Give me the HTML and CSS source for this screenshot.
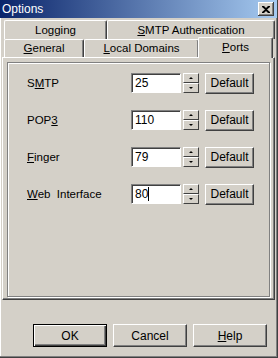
FILE: index.html
```html
<!DOCTYPE html>
<html lang="en">
<head>
    <meta charset="UTF-8">
    <title>Options</title>
    <link rel="stylesheet" href="styles.css">
</head>
<body>
    <div class="window">
        <div class="titlebar">
            <span class="title">Options</span>
            <button class="close">
                <svg width="8" height="7" viewBox="0 0 8 7"><path d="M0 0h2l2 2 2-2h2v1l-3 2.5 3 2.5v1h-2l-2-2-2 2h-2v-1l3-2.5-3-2.5z" fill="#000"/></svg>
            </button>
        </div>

        <div class="tabs">
            <div class="tab-row back">
                <div class="tab t-logging">Logging</div>
                <div class="tab t-auth"><u>S</u>MTP Authentication</div>
            </div>
            <div class="tab-row front">
                <div class="tab t-general"><u>G</u>eneral</div>
                <div class="tab t-domains"><u>L</u>ocal Domains</div>
                <div class="tab t-ports selected"><u>P</u>orts</div>
            </div>
            <div class="panel">
                <div class="group">
                    <div class="port-row">
                        <span class="label">S<u>M</u>TP</span>
                        <div class="field">25</div>
                        <div class="spin"><span class="up"></span><span class="down"></span></div>
                        <button class="btn small">Default</button>
                    </div>
                    <div class="port-row">
                        <span class="label">POP<u>3</u></span>
                        <div class="field">110</div>
                        <div class="spin"><span class="up"></span><span class="down"></span></div>
                        <button class="btn small">Default</button>
                    </div>
                    <div class="port-row">
                        <span class="label"><u>F</u>inger</span>
                        <div class="field">79</div>
                        <div class="spin"><span class="up"></span><span class="down"></span></div>
                        <button class="btn small">Default</button>
                    </div>
                    <div class="port-row">
                        <span class="label"><u>W</u>eb&nbsp; Interface</span>
                        <div class="field">80<span class="caret"></span></div>
                        <div class="spin"><span class="up"></span><span class="down"></span></div>
                        <button class="btn small">Default</button>
                    </div>
                </div>
            </div>
        </div>

        <div class="actions">
            <button class="btn big default">OK</button>
            <button class="btn big">Cancel</button>
            <button class="btn big"><u>H</u>elp</button>
        </div>
    </div>
</body>
</html>
```

FILE: styles.css
```css
body {
    margin: 0;
    font-family: "Liberation Sans", Arial, sans-serif;
    font-size: 11.5px;
    color: #000;
    background: #d4d0c8;
}

.window {
    width: 278px;
    height: 358px;
    box-sizing: border-box;
    background: #d4d0c8;
    border-right: 1px solid #404040;
    border-bottom: 1px solid #404040;
    box-shadow: inset -1px -1px 0 #808080, inset 1px 0 0 #fff;
    display: flex;
    flex-direction: column;
}

.titlebar {
    height: 18px;
    background: linear-gradient(to right, #0a246a, #a6caf0);
    display: flex;
    align-items: center;
    justify-content: space-between;
    padding: 0 2px 0 2px;
}

.title {
    color: #fff;
    font-size: 12px;
}

.close {
    width: 16px;
    height: 14px;
    padding: 0;
    margin-right: 1px;
    background: #d4d0c8;
    border: 0;
    box-shadow: inset -1px -1px 0 #404040, inset 1px 1px 0 #fff, inset -2px -2px 0 #808080;
    display: flex;
    align-items: center;
    justify-content: center;
}

.tabs {
    padding: 2px 2px 0 2px;
}

.tab-row {
    display: flex;
    padding-left: 2px;
}

.tab {
    box-sizing: border-box;
    text-align: center;
    border-top: 1px solid #fff;
    border-left: 1px solid #fff;
    border-right: 1px solid #404040;
    box-shadow: inset -1px 0 0 #808080;
    border-radius: 2px 2px 0 0;
}

.back .tab {
    height: 19px;
    line-height: 18px;
}

.front {
    height: 18px;
    align-items: flex-end;
}

.front .tab {
    height: 18px;
    line-height: 17px;
}

.t-logging { width: 103px; }
.t-auth { width: 168px; }
.t-general { width: 80px; }
.t-domains { width: 115px; }

.front .selected {
    width: 75px;
    height: 21px;
    line-height: 19px;
    margin-left: -1px;
    margin-bottom: -1px;
    background: #d4d0c8;
    position: relative;
    z-index: 1;
}

.panel {
    height: 243px;
    box-sizing: border-box;
    border-top: 1px solid #fff;
    border-left: 1px solid #fff;
    border-right: 1px solid #404040;
    border-bottom: 1px solid #404040;
    box-shadow: inset -1px -1px 0 #808080;
    padding: 4px 4px 2px 4px;
}

.group {
    height: 100%;
    box-sizing: border-box;
    border: 1px solid #808080;
    box-shadow: inset 1px 1px 0 #fff, 1px 1px 0 #fff;
    padding: 10px 0 0 19px;
    display: flex;
    flex-direction: column;
    gap: 17px;
}

.port-row {
    display: flex;
    align-items: center;
    height: 20px;
}

.label {
    width: 104px;
}

.field {
    width: 50px;
    height: 20px;
    box-sizing: border-box;
    background: #fff;
    border-top: 1px solid #808080;
    border-left: 1px solid #808080;
    border-right: 1px solid #fff;
    border-bottom: 1px solid #fff;
    box-shadow: inset 1px 1px 0 #404040;
    padding: 2px 0 0 3px;
    line-height: 15px;
    font-size: 12px;
    display: flex;
    align-items: flex-start;
}

.caret {
    width: 1px;
    height: 14px;
    background: #000;
}

.spin {
    width: 16px;
    height: 20px;
    margin-left: 2px;
    display: flex;
    flex-direction: column;
}

.spin span {
    flex: 1;
    box-sizing: border-box;
    background: #d4d0c8;
    border-top: 1px solid #fff;
    border-left: 1px solid #fff;
    border-right: 1px solid #404040;
    border-bottom: 1px solid #404040;
    display: flex;
    align-items: center;
    justify-content: center;
}

.spin .up::after {
    content: "";
    border-left: 2px solid transparent;
    border-right: 2px solid transparent;
    border-bottom: 2px solid #000;
}

.spin .down::after {
    content: "";
    border-left: 2px solid transparent;
    border-right: 2px solid transparent;
    border-top: 2px solid #000;
}

.btn {
    font-family: "Liberation Sans", Arial, sans-serif;
    font-size: 12px;
    color: #000;
    background: #d4d0c8;
    box-sizing: border-box;
    padding: 0;
    border-top: 1px solid #fff;
    border-left: 1px solid #fff;
    border-right: 1px solid #404040;
    border-bottom: 1px solid #404040;
    box-shadow: inset -1px -1px 0 #808080;
}

.small {
    width: 49px;
    height: 21px;
    margin-left: 6px;
}

.actions {
    display: flex;
    gap: 6px;
    padding: 24px 0 0 33px;
}

.big {
    width: 74px;
    height: 23px;
}

.default {
    border: 1px solid #000;
    box-shadow: inset 1px 1px 0 #fff, inset -1px -1px 0 #404040, inset -2px -2px 0 #808080;
}
```
